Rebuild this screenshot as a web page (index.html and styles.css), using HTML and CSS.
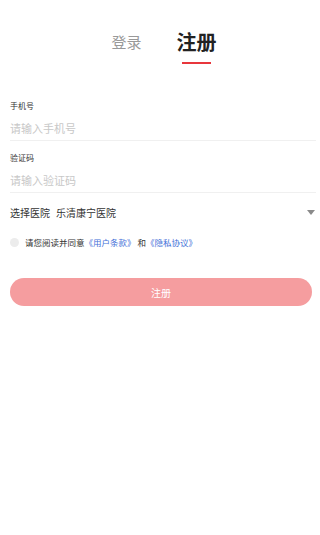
FILE: index.html
```html
<!DOCTYPE html>
<html lang="zh-CN">
<head>
  <meta charset="UTF-8">
  <meta name="viewport" content="width=device-width, initial-scale=1.0">
  <title>注册</title>
  <link rel="stylesheet" href="styles.css">
</head>
<body>
  <div class="page">
    <div class="tabs">
      <div class="tab">登录</div>
      <div class="tab active">注册</div>
    </div>

    <div class="form">
      <div class="field">
        <div class="field-label">手机号</div>
        <input class="field-input" type="text" placeholder="请输入手机号">
      </div>
      <div class="field">
        <div class="field-label">验证码</div>
        <input class="field-input" type="text" placeholder="请输入验证码">
      </div>

      <div class="hospital">
        <span class="hospital-label">选择医院</span>
        <span class="hospital-name">乐清康宁医院</span>
        <span class="arrow"></span>
      </div>

      <div class="agree">
        <span class="check-circle"></span>
        <span>请您阅读并同意<a class="link">《用户条款》</a> 和<a class="link">《隐私协议》</a></span>
      </div>

      <button class="submit">注册</button>
    </div>
  </div>
</body>
</html>
```

FILE: styles.css
```css
* {
  box-sizing: border-box;
}

body {
  margin: 0;
  background: #fff;
  font-family: "Noto Sans CJK SC", "Noto Sans", sans-serif;
  color: #333;
}

.page {
  padding-top: 24px;
}

.tabs {
  display: flex;
  justify-content: center;
  align-items: center;
  gap: 35px;
  height: 36px;
  padding-left: 8px;
}

.tab {
  position: relative;
  font-size: 15px;
  color: #999;
  line-height: 36px;
}

.tab.active {
  font-size: 20px;
  font-weight: bold;
  color: #222;
}

.tab.active::after {
  content: '';
  position: absolute;
  left: 5px;
  right: 6px;
  bottom: -4px;
  height: 2px;
  background: #e8363c;
}

.form {
  padding: 0 4px 0 10px;
  margin-top: 40px;
}

.field {
  border-bottom: 1px solid #f0f0f0;
  padding-bottom: 2px;
  margin-bottom: 11px;
}

.field-label {
  font-size: 8px;
  line-height: 12px;
  color: #333;
}

.field-input {
  display: block;
  width: 100%;
  border: none;
  outline: none;
  padding: 0;
  margin-top: 6px;
  height: 20px;
  font-family: inherit;
  font-size: 11px;
  color: #333;
}

.field-input::placeholder {
  color: #c8c8c8;
}

.hospital {
  display: flex;
  align-items: center;
  height: 16px;
  margin-top: 4px;
  font-size: 10px;
  color: #333;
}

.hospital-label {
  margin-right: 6px;
}

.hospital-name {
  flex: 1;
}

.arrow {
  width: 0;
  height: 0;
  border-left: 4px solid transparent;
  border-right: 4px solid transparent;
  border-top: 5px solid #8a8a8a;
  margin-right: 1px;
}

.agree {
  display: flex;
  align-items: center;
  gap: 6px;
  margin-top: 16px;
  font-size: 8.5px;
  color: #333;
}

.check-circle {
  width: 9px;
  height: 9px;
  border-radius: 50%;
  background: #ececec;
}

.link {
  color: #3f6fd8;
}

.submit {
  display: block;
  width: 302px;
  height: 28px;
  margin-top: 30px;
  border: none;
  border-radius: 14px;
  background: #f59d9f;
  color: #fff;
  font-family: inherit;
  font-size: 10px;
}
```
